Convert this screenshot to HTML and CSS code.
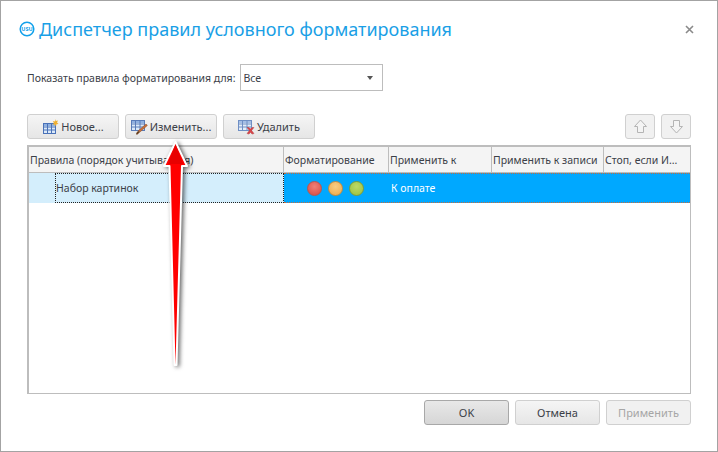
FILE: index.html
```html
<!DOCTYPE html>
<html lang="en">
<head>
  <meta charset="UTF-8" />
  <title>Диспетчер правил условного форматирования</title>
  <link rel="stylesheet" href="styles.css">
</head>
<body>

  <div class="dialog">
    <div class="title-bar">
      <svg class="logo" width="16" height="16" viewBox="0 0 16 16">
        <circle cx="8" cy="8" r="6.8" fill="none" stroke="#12a0ea" stroke-width="1.5"/>
        <text x="8" y="10" text-anchor="middle" class="logo-text">USU</text>
      </svg>
      <h1>Диспетчер правил условного форматирования</h1>
      <svg class="close" width="9" height="9" viewBox="0 0 9 9">
        <path d="M1 1l7 7M8 1l-7 7" stroke="#8a8a8a" stroke-width="1.6" fill="none"/>
      </svg>
    </div>

    <div class="show-row">
      <span>Показать правила форматирования для:</span>
      <div class="combo">
        <span>Все</span>
        <i class="combo-arrow"></i>
      </div>
    </div>

    <div class="toolbar">
      <button class="btn tool-btn">
        <svg width="17" height="16" viewBox="0 0 17 16">
          <rect x="1.5" y="4.500" width="12" height="10" fill="#dbe9f8" stroke="#4a72b8"/>
          <rect x="2" y="5" width="11" height="2" fill="#8fb0e0"/>
          <path d="M1.500 8h12M1.500 11h12M5.500 4.500v10M9.500 4.500v10" stroke="#4a72b8" fill="none"/>
          <path d="M13 0l.9 2.100L16 1.600l-1 2 1.600 1.400-2.200.3L14 7.500l-1.200-2-2.200.2 1.300-1.700-1-2 2.200.6z" fill="#f0b030"/>
        </svg>
        Новое...
      </button>
      <button class="btn tool-btn">
        <svg width="17" height="16" viewBox="0 0 17 16">
          <rect x="0.5" y="1.500" width="13" height="10" fill="#dbe9f8" stroke="#5a7cb8"/>
          <rect x="1" y="2" width="12" height="2" fill="#8fb0e0"/>
          <path d="M0.500 5h13M0.500 8h13M4.500 1.500v10M9 1.500v10" stroke="#5a7cb8" fill="none"/>
          <path d="M15 5l1.400 1.400L9 13l-2-1z" fill="#c8703a" stroke="#8a4a24" stroke-width=".5"/>
          <path d="M7 12l2 1-2.500 2.400-1.500.2.300-1.600z" fill="#6a4020"/>
        </svg>
        Изменить...
      </button>
      <button class="btn tool-btn">
        <svg width="17" height="16" viewBox="0 0 17 16">
          <rect x="0.5" y="1.500" width="13" height="10" fill="#e4edf8" stroke="#6f8fc4"/>
          <rect x="1" y="2" width="12" height="2" fill="#a5bfe6"/>
          <path d="M0.500 5h13M0.500 8h13M4.500 1.500v10M9 1.500v10" stroke="#6f8fc4" fill="none"/>
          <path d="M9 8.500l2 0 1.500 1.600L14 8.500l2 0-2.400 3 2.400 3-2 .6-1.500-1.800-1.500 1.800-2-.6 2.400-3z" fill="#d9464a" stroke="#a83236" stroke-width=".4"/>
        </svg>
        Удалить
      </button>
      <div class="spacer"></div>
      <button class="btn move-btn">
        <svg width="15" height="17" viewBox="0 0 15 17">
          <path d="M7.500 2L13.500 8.500h-3v6h-6v-6h-3z" fill="#f4f4f4" stroke="#b4b4b4"/>
        </svg>
      </button>
      <button class="btn move-btn">
        <svg width="15" height="17" viewBox="0 0 15 17">
          <path d="M7.500 15L13.500 8.500h-3v-6h-6v6h-3z" fill="#f4f4f4" stroke="#b4b4b4"/>
        </svg>
      </button>
    </div>

    <div class="rules-grid">
      <div class="grid-head">
        <div class="head-cell">Правила (порядок учитывается)</div>
        <div class="head-cell">Форматирование</div>
        <div class="head-cell">Применить к</div>
        <div class="head-cell">Применить к записи</div>
        <div class="head-cell last">Стоп, если И...</div>
      </div>
      <div class="grid-row">
        <div class="row-name">
          <div class="row-indent"></div>
          <div class="row-focus">Набор картинок</div>
        </div>
        <div class="row-selected">
          <div class="row-dots">
            <i class="dot red"></i>
            <i class="dot orange"></i>
            <i class="dot green"></i>
          </div>
          <div class="row-apply">К оплате</div>
        </div>
      </div>
    </div>

    <div class="footer">
      <button class="btn foot-btn default">OK</button>
      <button class="btn foot-btn">Отмена</button>
      <button class="btn foot-btn disabled">Применить</button>
    </div>

    <svg class="pointer" width="40" height="240" viewBox="0 0 40 240">
      <path d="M19.500 3L31 27h-5L20.500 226h-2L13.500 27H8z" fill="#ff0000" stroke="#fff" stroke-width="2" stroke-linejoin="round"/>
      <path d="M19.500 5L12 25h15z" fill="#e80000"/>
    </svg>
  </div>

</body>
</html>
```

FILE: styles.css
```css
* {
  margin: 0;
  padding: 0;
  box-sizing: border-box;
  font-family: "Noto Sans", "Open Sans", sans-serif;
}

body {
  background: #fff;
  overflow: hidden;
}

.dialog {
  position: relative;
  width: 718px;
  height: 452px;
  background: #fff;
  border: 1px solid #a3a3a3;
  padding: 0 26px;
  color: #3b4048;
  font-size: 10.500px;
}

.title-bar {
  display: flex;
  align-items: center;
  height: 56px;
  margin-left: -8px;
  margin-bottom: 7px;
}

.logo {
  margin-right: 4px;
}

.logo-text {
  font-size: 5.500px;
  font-weight: 700;
  fill: #12a0ea;
}

h1 {
  font-size: 18px;
  font-weight: 400;
  color: #1a9fe6;
  white-space: nowrap;
}

.close {
  margin-left: auto;
  margin-right: -3px;
}

.show-row {
  display: flex;
  align-items: center;
  gap: 5px;
  height: 27px;
  white-space: nowrap;
}

.combo {
  display: flex;
  align-items: center;
  justify-content: space-between;
  width: 143px;
  height: 27px;
  padding: 0 9px 0 2px;
  border: 1px solid #bdbdbd;
}

.combo-arrow {
  width: 0;
  height: 0;
  border: 3.500px solid transparent;
  border-top: 4px solid #555;
  border-bottom: 0;
}

.toolbar {
  display: flex;
  gap: 6px;
  margin-top: 23px;
}

.spacer {
  flex: 1;
}

.btn {
  display: flex;
  align-items: center;
  justify-content: center;
  height: 25px;
  border: 1px solid #d0d0d0;
  border-radius: 3px;
  background: linear-gradient(#f5f5f5, #e6e6e6);
  color: #3b4048;
  font-size: 11px;
}

.tool-btn {
  width: 92px;
  gap: 2px;
}

.move-btn {
  width: 30px;
  background: #f1f1f1;
}

.rules-grid {
  height: 249px;
  margin-top: 6px;
  border: 1px solid #bdbdbd;
  border-top-width: 2px;
  border-left-width: 2px;
}

.grid-head {
  display: grid;
  grid-template-columns: 255px 105px 103px 112px 1fr;
  height: 26px;
  background: #f4f4f4;
  border-bottom: 1px solid #bdbdbd;
}

.head-cell {
  display: flex;
  align-items: center;
  padding-left: 1px;
  border-right: 1px solid #bdbdbd;
  white-space: nowrap;
}

.head-cell.last {
  border-right: 0;
}

.grid-row {
  display: flex;
  height: 30px;
}

.row-name {
  display: flex;
  width: 255px;
  background: #d4eefc;
}

.row-indent {
  width: 26px;
}

.row-focus {
  flex: 1;
  display: flex;
  align-items: center;
  border: 1px dotted #222;
}

.row-selected {
  flex: 1;
  display: flex;
  background: #00a8ff;
  border-top: 1px dotted #c86a3a;
  border-bottom: 1px dotted #c86a3a;
}

.row-dots {
  display: flex;
  align-items: center;
  gap: 6px;
  width: 105px;
  padding-left: 23px;
}

.dot {
  width: 15px;
  height: 15px;
  border-radius: 50%;
}

.dot.red {
  background: radial-gradient(circle at 50% 35%, #ee8077, #d9483f);
  border: 1px solid #b8564e;
}

.dot.orange {
  background: radial-gradient(circle at 50% 35%, #f7cd84, #eda848);
  border: 1px solid #c48a3e;
}

.dot.green {
  background: radial-gradient(circle at 50% 35%, #bcd966, #98c03c);
  border: 1px solid #7d9c38;
}

.row-apply {
  display: flex;
  align-items: center;
  padding-left: 2px;
  color: #fff;
}

.footer {
  display: flex;
  justify-content: flex-end;
  gap: 6px;
  margin-top: 6px;
}

.foot-btn {
  width: 85px;
}

.foot-btn.default {
  background: linear-gradient(#e8e8e8, #d6d6d6);
  border-color: #a8a8a8;
}

.foot-btn.disabled {
  background: #f1f1f1;
  color: #a6a6a6;
}

.pointer {
  position: absolute;
  left: 155px;
  top: 138px;
  filter: drop-shadow(2px 1px 2px rgba(0, 0, 0, 0.6));
}
```
